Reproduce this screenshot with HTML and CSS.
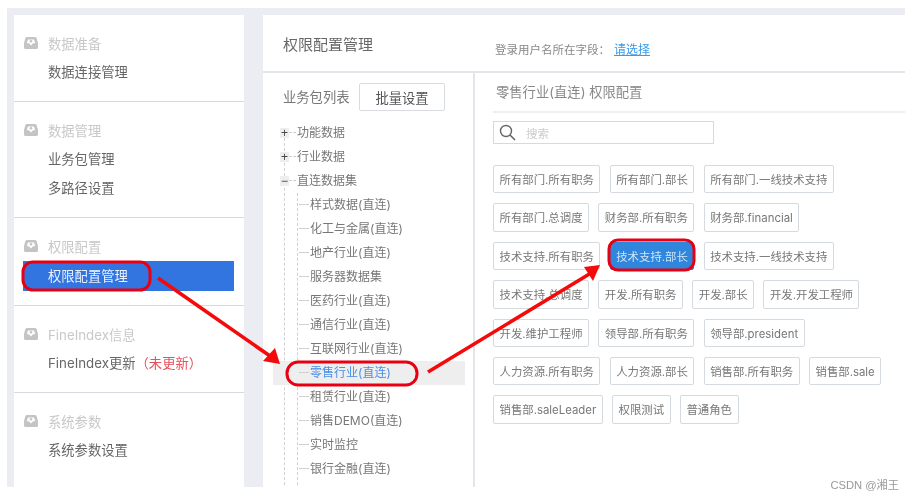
FILE: index.html
```html
<!DOCTYPE html>
<html lang="zh-CN">
<head>
<meta charset="utf-8">
<title>权限配置管理</title>
<link rel="stylesheet" href="styles.css">
</head>
<body>
<svg width="0" height="0" class="defs"><symbol id="box" viewBox="0 0 14 12"><path fill="#c4c4c4" fill-rule="evenodd" d="M3 0h8c.8 0 1.300.4 1.600 1L14 6v4.500c0 .9-.6 1.500-1.500 1.500h-11C.6 12 0 11.400 0 10.500V6l1.400-5C1.700.4 2.200 0 3 0zM4 2.500 2.800 6.300H5L7 8.400 9 6.300h2.200L10 2.500z"/><circle cx="7" cy="4.300" r="1.300" fill="#c4c4c4"/></symbol></svg>
<div class="frame">
  <nav class="sidebar">
    <section class="group">
      <h3 class="group-title"><svg class="group-icon"><use href="#box"/></svg>数据准备</h3>
      <a class="nav-item">数据连接管理</a>
    </section>
    <section class="group">
      <h3 class="group-title"><svg class="group-icon"><use href="#box"/></svg>数据管理</h3>
      <a class="nav-item">业务包管理</a>
      <a class="nav-item">多路径设置</a>
    </section>
    <section class="group">
      <h3 class="group-title"><svg class="group-icon"><use href="#box"/></svg>权限配置</h3>
      <a class="nav-item nav-item-active">权限配置管理</a>
    </section>
    <section class="group">
      <h3 class="group-title"><svg class="group-icon"><use href="#box"/></svg>FineIndex信息</h3>
      <a class="nav-item">FineIndex更新<span class="nav-note">（未更新）</span></a>
    </section>
    <section class="group group-last">
      <h3 class="group-title"><svg class="group-icon"><use href="#box"/></svg>系统参数</h3>
      <a class="nav-item">系统参数设置</a>
    </section>
  </nav>
  <main class="main">
    <header class="main-head">
      <h1 class="main-title">权限配置管理</h1>
      <div class="field">登录用户名所在字段：<a class="field-link">请选择</a></div>
    </header>
    <div class="columns">
      <aside class="pkg">
        <div class="pkg-head">
          <span class="pkg-title">业务包列表</span>
          <button class="pkg-btn">批量设置</button>
        </div>
        <div class="tree">
          <div class="row"><span class="toggle">+</span><span class="dash"></span>功能数据</div>
          <div class="row"><span class="toggle">+</span><span class="dash"></span>行业数据</div>
          <div class="row"><span class="toggle">−</span><span class="dash"></span>直连数据集</div>
          <div class="children">
            <div class="row row-child"><span class="dash"></span>样式数据(直连)</div>
            <div class="row row-child"><span class="dash"></span>化工与金属(直连)</div>
            <div class="row row-child"><span class="dash"></span>地产行业(直连)</div>
            <div class="row row-child"><span class="dash"></span>服务器数据集</div>
            <div class="row row-child"><span class="dash"></span>医药行业(直连)</div>
            <div class="row row-child"><span class="dash"></span>通信行业(直连)</div>
            <div class="row row-child"><span class="dash"></span>互联网行业(直连)</div>
            <div class="row row-child row-active"><span class="dash"></span>零售行业(直连)</div>
            <div class="row row-child"><span class="dash"></span>租赁行业(直连)</div>
            <div class="row row-child"><span class="dash"></span>销售DEMO(直连)</div>
            <div class="row row-child"><span class="dash"></span>实时监控</div>
            <div class="row row-child"><span class="dash"></span>银行金融(直连)</div>
            <div class="row row-child"></div>
          </div>
        </div>
      </aside>
      <section class="perm">
        <h2 class="perm-title">零售行业(直连) 权限配置</h2>
        <div class="search">
          <svg class="search-icon" width="17" height="17" viewBox="0 0 17 17"><circle cx="7" cy="7" r="5.500" fill="none" stroke="#666" stroke-width="1.400"/><path d="M11 11l5 5" stroke="#666" stroke-width="1.600"/></svg>
          <span class="search-hint">搜索</span>
        </div>
        <div class="tags">
          <span class="tag">所有部门.所有职务</span>
          <span class="tag">所有部门.部长</span>
          <span class="tag">所有部门.一线技术支持</span>
          <span class="tag">所有部门.总调度</span>
          <span class="tag">财务部.所有职务</span>
          <span class="tag">财务部.financial</span>
          <span class="tag">技术支持.所有职务</span>
          <span class="tag tag-active">技术支持.部长</span>
          <span class="tag">技术支持.一线技术支持</span>
          <span class="tag">技术支持.总调度</span>
          <span class="tag">开发.所有职务</span>
          <span class="tag">开发.部长</span>
          <span class="tag">开发.开发工程师</span>
          <span class="tag">开发.维护工程师</span>
          <span class="tag">领导部.所有职务</span>
          <span class="tag">领导部.president</span>
          <span class="tag">人力资源.所有职务</span>
          <span class="tag">人力资源.部长</span>
          <span class="tag">销售部.所有职务</span>
          <span class="tag">销售部.sale</span>
          <span class="tag">销售部.saleLeader</span>
          <span class="tag">权限测试</span>
          <span class="tag">普通角色</span>
        </div>
      </section>
    </div>
  </main>
</div>
<svg class="marks" width="914" height="499" viewBox="0 0 914 499">
  <g fill="none" stroke="#e60012" stroke-width="3">
    <rect x="23" y="262" width="127" height="28" rx="10"/>
    <rect x="287" y="362" width="130" height="23" rx="11"/>
    <rect x="609" y="240" width="85" height="30" rx="9"/>
  </g>
  <g stroke="#f40a0a" stroke-width="3.600" fill="#f40a0a">
    <path d="M158 278 270 356"/>
    <path d="M428 372 591 273"/>
    <path stroke="none" d="M280 364 263 361 275 348z"/>
    <path stroke="none" d="M600 265 584 267 593 281z"/>
  </g>
</svg>
<span class="watermark">CSDN @湘王</span>
</body>
</html>
```
FILE: styles.css
```css
* { box-sizing: border-box; }
html, body { margin: 0; padding: 0; background: #fff; }
body {
  font-family: Inter, "Noto Sans CJK SC", sans-serif;
  color: #666;
  font-size: 12px;
  width: 914px;
  height: 499px;
  overflow: hidden;
  position: relative;
  filter: blur(0.35px);
}
.defs { position: absolute; }
.frame {
  margin: 8px 9px 0 7px;
  height: 479px;
  padding: 7px 0 0 7px;
  background: #ebedf2;
  display: flex;
  gap: 19px;
}
.sidebar { width: 230px; background: #fff; }
.group { padding: 14px 0 14px; border-bottom: 1px solid #d6d9dd; }
.group-last { border-bottom: 0; }
.group-title {
  margin: 0;
  height: 29px;
  padding: 0 0 1px 10px;
  display: flex;
  align-items: center;
  font-size: 13.300px;
  font-weight: 400;
  color: #c8c8c8;
}
.group-icon { width: 14px; height: 12px; margin-right: 10px; }
.nav-item {
  display: block;
  height: 29px;
  line-height: 29px;
  margin: 0 10px 0 9px;
  padding-left: 25px;
  font-size: 13.300px;
  color: #666;
}
.nav-item-active { height: 30px; line-height: 30px; background: #3375e0; color: #eaf1fc; }
.nav-note { color: #e8505b; }
.main {
  flex: 1;
  background: #fff;
  display: flex;
  flex-direction: column;
  overflow: hidden;
}
.main-head {
  height: 58px;
  flex: none;
  border-bottom: 2px solid #e3e5ea;
  display: flex;
  align-items: center;
  padding-left: 20px;
}
.main-title { margin: 0; width: 212px; font-size: 15px; font-weight: 400; color: #666; }
.field { font-size: 11.500px; color: #888; padding-top: 10px; }
.field-link { margin-left: 4px; color: #3b9ae8; text-decoration: underline; font-size: 12px; }
.columns { flex: 1; display: flex; min-height: 0; }
.pkg { width: 212px; flex: none; border-right: 2px solid #e3e5ea; padding-left: 10px; overflow: hidden; }
.pkg-head { display: flex; align-items: flex-start; height: 48px; padding: 10px 0 0 10px; }
.pkg-title { width: 76px; line-height: 28px; font-size: 13.300px; color: #777; }
.pkg-btn {
  width: 86px;
  height: 28px;
  padding: 0;
  background: #fff;
  border: 1px solid #d8dbe0;
  border-radius: 2px;
  font: inherit;
  font-size: 13.300px;
  color: #555;
}
.tree { position: relative; width: 192px; }
.tree::before {
  content: "";
  position: absolute;
  left: 11px;
  top: 17px;
  bottom: 0;
  border-left: 1px dashed #d0d0d0;
}
.row {
  position: relative;
  height: 24px;
  display: flex;
  align-items: center;
  padding: 0 0 3px 7px;
  color: #777;
  font-size: 12px;
}
.toggle {
  position: relative;
  width: 9px;
  height: 10px;
  margin-top: 2px;
  background: #eee;
  color: #444;
  font: 12px/10px "Liberation Sans", sans-serif;
  text-align: center;
  flex: none;
}
.dash { width: 7px; margin-right: 1px; border-top: 1px dashed #ccc; flex: none; margin-top: 2px; }
.children { position: relative; }
.children::before {
  content: "";
  position: absolute;
  left: 24px;
  top: 0;
  bottom: 0;
  border-left: 1px dashed #d0d0d0;
}
.row-child { padding-left: 26px; }
.row-child .dash { width: 10px; }
.row-active { background: #eee; color: #4a8ee6; }
.perm { flex: 1; padding-left: 18px; min-width: 0; }
.perm-title {
  margin: 0;
  height: 40px;
  line-height: 38px;
  padding-left: 3px;
  border-bottom: 2px solid #eeeff2;
  font-size: 13.300px;
  font-weight: 400;
  color: #888;
}
.search {
  margin-top: 8px;
  width: 221px;
  height: 23px;
  border: 1px solid #d5dae0;
  display: flex;
  align-items: center;
  padding-left: 5px;
}
.search-hint { margin-left: 10px; color: #ccc; font-size: 11.500px; }
.tags { display: flex; flex-wrap: wrap; gap: 10px 9.300px; margin-top: 21px; }
.tag {
  height: 28.400px;
  line-height: 28px;
  padding: 0 5.500px;
  border: 1px solid #d5dae0;
  border-radius: 2px;
  color: #777;
  font-size: 11.400px;
}
.tag-active { background: #2f86dc; border-color: #2f86dc; color: #cfe4f8; }
.marks { position: absolute; left: 0; top: 0; pointer-events: none; }
.watermark { position: absolute; right: 15px; top: 476px; color: #999; font: 11.200px "Liberation Sans", "Noto Sans CJK SC", sans-serif; }
```
